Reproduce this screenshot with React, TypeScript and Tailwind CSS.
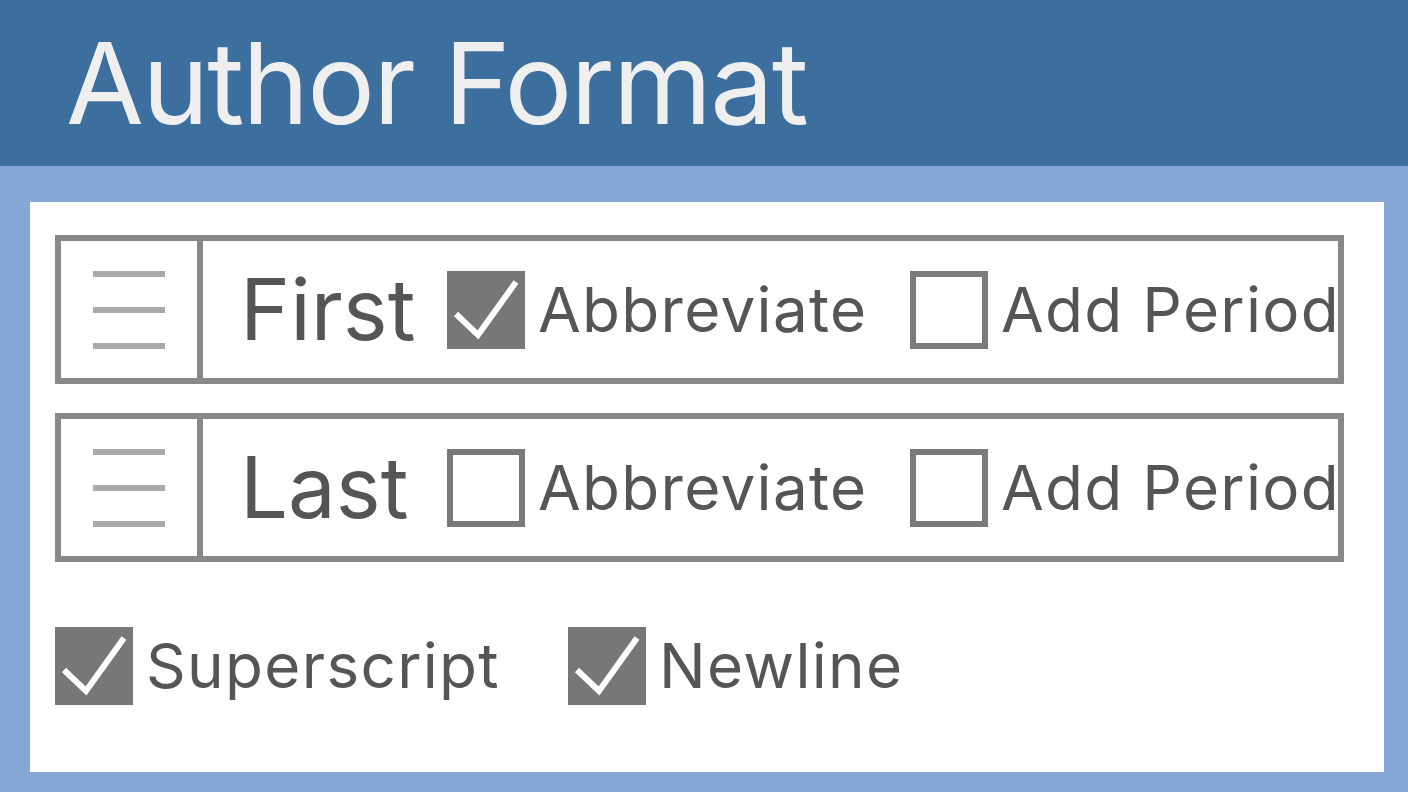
import React from "react";

const FONT = { fontFamily: "Inter, 'Noto Sans', sans-serif" };

function Check({ checked }: { checked: boolean }) {
  if (checked) {
    return (
      <div className="w-[78px] h-[78px] shrink-0 bg-[#777777]">
        <svg viewBox="0 0 78 78" width="78" height="78">
          <path d="M9 43 L31 64 L69 11" fill="none" stroke="#ffffff" strokeWidth="6" />
        </svg>
      </div>
    );
  }
  return <div className="w-[78px] h-[78px] shrink-0 border-[6px] border-[#7a7a7a] bg-white" />;
}

function Option({ checked, label, width }: { checked: boolean; label: string; width: string }) {
  return (
    <div className={`flex items-center ${width}`}>
      <Check checked={checked} />
      <span className="ml-[13px] text-[62px] leading-none tracking-[1.3px] text-[#555555] whitespace-nowrap">
        {label}
      </span>
    </div>
  );
}

function Handle() {
  return (
    <div className="w-[142px] shrink-0 border-r-[6px] border-[#888888] flex flex-col items-center justify-center gap-[30px]">
      <div className="w-[72px] h-[6px] bg-[#aaaaaa]" />
      <div className="w-[72px] h-[6px] bg-[#aaaaaa]" />
      <div className="w-[72px] h-[6px] bg-[#aaaaaa]" />
    </div>
  );
}

function NameRow({ name, abbreviate, period }: { name: string; abbreviate: boolean; period: boolean }) {
  return (
    <div className="h-[149px] shrink-0 border-[6px] border-[#888888] flex min-w-0">
      <Handle />
      <div className="flex-1 min-w-0 flex items-center pl-[37px]">
        <span className="w-[207px] shrink-0 text-[85px] leading-none text-[#555555]">{name}</span>
        <Option checked={abbreviate} label="Abbreviate" width="w-[463px] shrink-0" />
        <Option checked={period} label="Add Period" width="flex-1 min-w-0" />
      </div>
    </div>
  );
}

export default function App() {
  return (
    <div className="w-[1408px] h-[792px] bg-[#84a7d4] flex flex-col overflow-hidden" style={FONT}>
      <div className="h-[166px] shrink-0 bg-[#3c6e9e] flex items-center pl-[66px]">
        <span className="text-[113px] leading-none tracking-[-1.8px] text-[#efefef]">Author Format</span>
      </div>
      <div className="flex-1 min-h-0 pt-[36px] pl-[30px] pr-[24px] pb-[20px] flex">
        <div className="flex-1 min-w-0 bg-white pt-[33px] pl-[25px] pr-[40px] flex flex-col">
          <NameRow name="First" abbreviate={true} period={false} />
          <div className="h-[29px] shrink-0" />
          <NameRow name="Last" abbreviate={false} period={false} />
          <div className="flex items-center mt-[65px]">
            <Option checked={true} label="Superscript" width="w-[513px] shrink-0" />
            <Option checked={true} label="Newline" width="w-auto" />
          </div>
        </div>
      </div>
    </div>
  );
}
